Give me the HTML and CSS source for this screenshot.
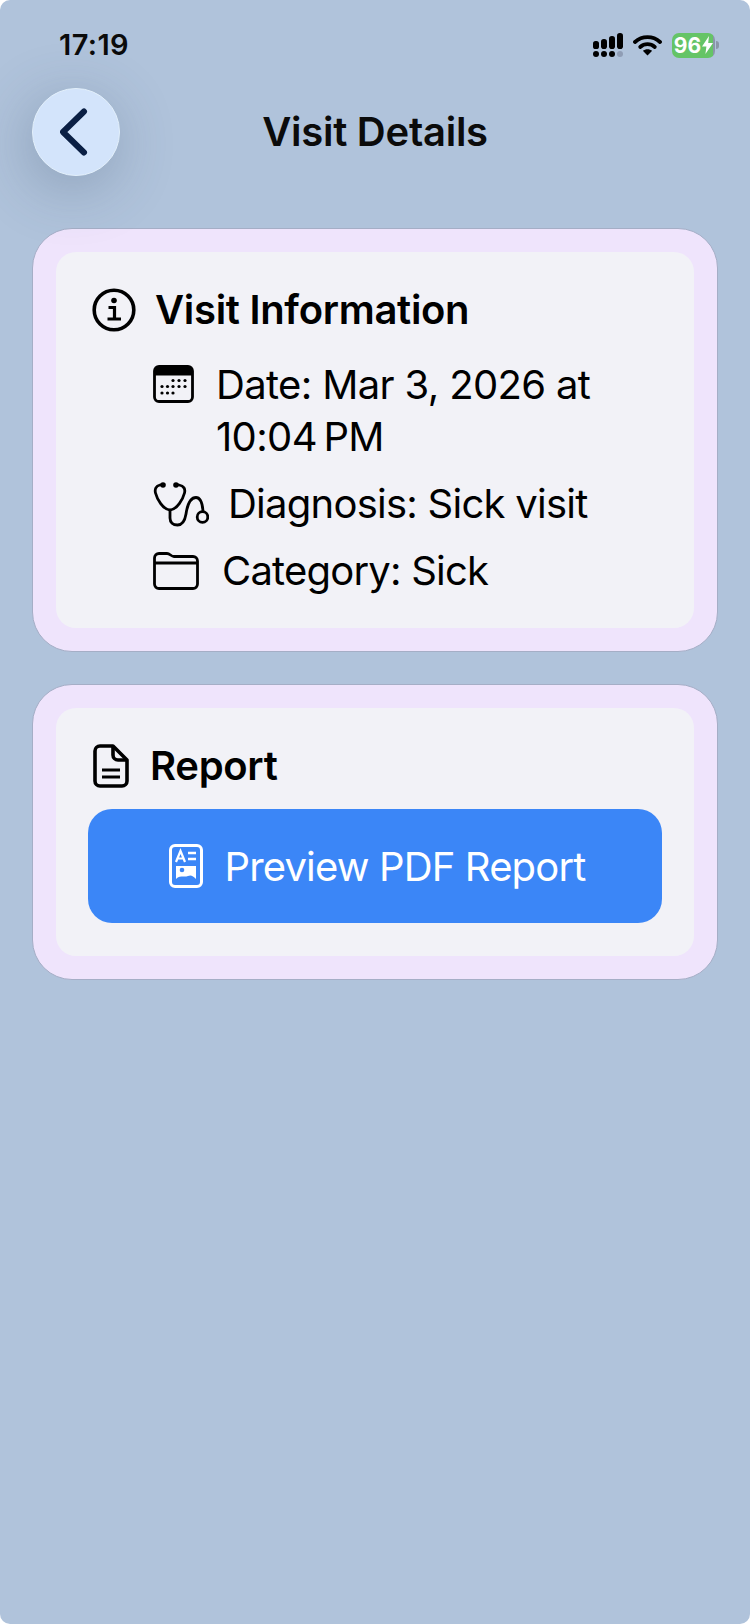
FILE: index.html
```html
<!DOCTYPE html>
<html lang="en">
<head>
    <meta charset="UTF-8">
    <meta name="viewport" content="width=device-width, initial-scale=1.0">
    <title>Visit Details</title>
    <link rel="stylesheet" href="styles.css">
</head>
<body>
    <div class="screen">
        <div class="status-bar">
            <span class="clock">17:19</span>
            <div class="status-icons">
                <svg class="signal" width="30" height="24" viewBox="0 0 30 24">
                    <g fill="#000">
                        <circle cx="3" cy="21" r="3"/><circle cx="11" cy="21" r="3"/><circle cx="19" cy="21" r="3"/>
                        <circle cx="27" cy="21" r="3" fill="#8f9db5"/>
                        <rect x="0" y="8" width="6" height="8" rx="2.6"/>
                        <rect x="8" y="6" width="6" height="10" rx="2.8"/>
                        <rect x="16" y="3" width="6" height="13" rx="2.8"/>
                        <rect x="24" y="0" width="6" height="16" rx="2.8"/>
                    </g>
                </svg>
                <svg class="wifi" width="29" height="22" viewBox="0 0 29 22">
                    <path d="M2 8C9 1.600 20 1.600 27 8" fill="none" stroke="#000" stroke-width="3.800" stroke-linecap="round"/>
                    <path d="M7.200 13C11.500 9.200 17.500 9.200 21.800 13" fill="none" stroke="#000" stroke-width="3.800" stroke-linecap="round"/>
                    <path d="M14.500 21.500L9.800 16.800C12.500 14.600 16.500 14.600 19.200 16.800Z" fill="#000"/>
                </svg>
                <div class="battery">
                    <div class="battery-body">
                        <span>96</span>
                        <svg width="11" height="18" viewBox="0 0 11 18"><path d="M7 0L0 10.500H4.400L3.400 18L11 7H6.200Z" fill="#fff"/></svg>
                    </div>
                    <div class="battery-cap"></div>
                </div>
            </div>
        </div>

        <header class="nav">
            <button class="back-btn">
                <svg width="32" height="50" viewBox="0 0 32 50">
                    <path d="M24 4.500L3 25L24 45.500" fill="none" stroke="#0a1f44" stroke-width="6" stroke-linecap="round" stroke-linejoin="round"/>
                </svg>
            </button>
            <h1>Visit Details</h1>
        </header>

        <section class="card">
            <div class="card-inner info-inner">
                <div class="card-title">
                    <svg class="title-icon" width="44" height="44" viewBox="0 0 44 44">
                        <circle cx="22" cy="22" r="19.800" fill="none" stroke="#000" stroke-width="3.600"/>
                        <circle cx="22" cy="12.500" r="2.800" fill="#000"/>
                        <path d="M16.500 19.500H22.500V31M15.500 31H29" fill="none" stroke="#000" stroke-width="3.200"/>
                    </svg>
                    <h2>Visit Information</h2>
                </div>
                <div class="rows">
                    <div class="row row-date">
                        <svg width="42" height="38" viewBox="0 0 42 38">
                            <rect x="1.500" y="1.500" width="38" height="35" rx="4.500" fill="none" stroke="#000" stroke-width="2.800"/>
                            <path d="M1.500 10.500V6A4.500 4.500 0 0 1 6 1.500H35A4.500 4.500 0 0 1 39.500 6V10.500Z" fill="#000"/>
                            <g fill="#000">
                                <circle cx="20" cy="15.500" r="1.600"/><circle cx="26" cy="15.500" r="1.600"/><circle cx="32" cy="15.500" r="1.600"/>
                                <circle cx="9" cy="21.500" r="1.600"/><circle cx="14.500" cy="21.500" r="1.600"/><circle cx="20" cy="21.500" r="1.600"/><circle cx="26" cy="21.500" r="1.600"/><circle cx="32" cy="21.500" r="1.600"/>
                                <circle cx="9" cy="28" r="1.600"/><circle cx="14.500" cy="28" r="1.600"/><circle cx="20" cy="28" r="1.600"/>
                            </g>
                        </svg>
                        <span class="row-text">Date: Mar 3, 2026 at 10:04&#8201;PM</span>
                    </div>
                    <div class="row row-diagnosis">
                        <svg width="56" height="46" viewBox="0 0 56 46">
                            <path d="M7 4C3 5 1.500 8 2.500 12C4 18 10 28.500 17 29C24 28.500 30 18 31.500 12C32.500 8 31 5 26 4" fill="none" stroke="#000" stroke-width="2.800" stroke-linecap="round"/>
                            <circle cx="10" cy="4" r="2.800" fill="#000"/>
                            <circle cx="23" cy="4" r="2.800" fill="#000"/>
                            <path d="M17 29V37C17 41.500 20 44 24.500 44C30 44 32 39 33 33C34.200 25 37 16.500 43 16.500C47.500 16.500 49.500 23 50 30.500" fill="none" stroke="#000" stroke-width="2.800"/>
                            <circle cx="49.500" cy="36" r="5.300" fill="none" stroke="#000" stroke-width="2.800"/>
                        </svg>
                        <span class="row-text">Diagnosis: Sick visit</span>
                    </div>
                    <div class="row row-category">
                        <svg width="46" height="38" viewBox="0 0 46 38">
                            <path d="M1.500 6A4.500 4.500 0 0 1 6 1.500H14C17 1.500 18 4.500 21 4.500H40A4.500 4.500 0 0 1 44.500 9V32A4.500 4.500 0 0 1 40 36.500H6A4.500 4.500 0 0 1 1.500 32Z" fill="none" stroke="#000" stroke-width="2.800" stroke-linejoin="round"/>
                            <path d="M2 11H44" fill="none" stroke="#000" stroke-width="2.800"/>
                        </svg>
                        <span class="row-text">Category: Sick</span>
                    </div>
                </div>
            </div>
        </section>

        <section class="card">
            <div class="card-inner report-inner">
                <div class="card-title report-title">
                    <svg class="title-icon" width="36" height="44" viewBox="0 0 36 44">
                        <path d="M7 2H20L34 16V37A5 5 0 0 1 29 42H7A5 5 0 0 1 2 37V7A5 5 0 0 1 7 2Z" fill="none" stroke="#000" stroke-width="3.600" stroke-linejoin="round"/>
                        <path d="M20 2V11A5 5 0 0 0 25 16H34" fill="none" stroke="#000" stroke-width="3.600"/>
                        <path d="M9 26H27M9 33H27" fill="none" stroke="#000" stroke-width="2.800"/>
                    </svg>
                    <h2>Report</h2>
                </div>
                <button class="preview-btn">
                    <svg width="34" height="44" viewBox="0 0 34 44">
                        <rect x="1.500" y="1.500" width="31" height="41" rx="4.500" fill="none" stroke="#fff" stroke-width="3"/>
                        <path d="M7 18L11.500 7L16 18M8.700 14.500H14.300" fill="none" stroke="#fff" stroke-width="2.200"/>
                        <path d="M19 9H27M19 15H27" fill="none" stroke="#fff" stroke-width="2.400"/>
                        <path d="M7 22H27V35C24 32 22 30.500 19 32C16 33.500 11 31 7 35Z" fill="#fff"/>
                        <circle cx="13" cy="26" r="2.300" fill="#3b86f7"/>
                    </svg>
                    <span>Preview PDF Report</span>
                </button>
            </div>
        </section>
    </div>
</body>
</html>
```

FILE: styles.css
```css
html, body {
    margin: 0;
    padding: 0;
    background: #fff;
}

body {
    font-family: 'Inter', 'Liberation Sans', sans-serif;
    color: #000;
}

.screen {
    width: 750px;
    height: 1624px;
    box-sizing: border-box;
    padding: 0 32px;
    background: #b0c3db;
    border-radius: 10px;
    overflow: hidden;
}

.status-bar {
    height: 88px;
    display: flex;
    justify-content: space-between;
    align-items: flex-start;
    padding: 29px 3px 0 27px;
    box-sizing: border-box;
    margin-right: -4px;
}

.clock {
    font-size: 29px;
    line-height: 32px;
    font-weight: 600;
    letter-spacing: 0.4px;
    color: #0b0b0b;
}

.status-icons {
    display: flex;
    align-items: center;
    gap: 10px;
    height: 26px;
    margin-top: 3px;
}

.battery {
    display: flex;
    align-items: center;
    gap: 1px;
}

.battery-body {
    width: 43px;
    height: 25px;
    border-radius: 7px;
    background: linear-gradient(to right, #65c466 96%, #8a96a8 96%);
    color: #fff;
    font-size: 21px;
    font-weight: 700;
    display: flex;
    align-items: center;
    justify-content: center;
    gap: 1px;
}

.battery-cap {
    width: 3px;
    height: 8px;
    border-radius: 0 3px 3px 0;
    background: #8a96a8;
}

.nav {
    display: flex;
    align-items: center;
    height: 88px;
    position: relative;
    justify-content: center;
}

.back-btn {
    position: absolute;
    left: 0;
    top: 0;
    width: 88px;
    height: 88px;
    padding: 0;
    border: 1px solid #e3f0fb;
    border-radius: 50%;
    background: #d3e4fb;
    box-shadow: -4px 12px 60px rgba(60, 80, 110, 0.32);
    display: flex;
    align-items: center;
    justify-content: center;
}

h1 {
    margin: 0;
    font-size: 40px;
    font-weight: 600;
    line-height: 48px;
    letter-spacing: -0.25px;
    color: #0b0b0b;
}

.card {
    background: #efe4fc;
    border: 1px solid #a5aec6;
    border-radius: 40px;
    padding: 23px;
    margin-bottom: 32px;
}

.nav + .card {
    margin-top: 52px;
}

.card-inner {
    background: #f2f2f7;
    border-radius: 20px;
}

.info-inner {
    padding: 35px 32px 31px 36px;
}

.report-inner {
    padding: 35px 32px 33px;
}

.card-title {
    display: flex;
    align-items: center;
    gap: 19px;
}

.title-icon {
    flex: none;
}

h2 {
    margin: 0;
    font-size: 40px;
    font-weight: 600;
    line-height: 46px;
    letter-spacing: -0.3px;
}

.rows {
    margin-top: 26px;
    padding-left: 61px;
    display: flex;
    flex-direction: column;
    gap: 15px;
}

.row {
    display: flex;
    align-items: center;
    font-size: 40px;
    line-height: 52px;
    letter-spacing: -0.65px;
}

.row svg {
    flex: none;
}

.row-date {
    align-items: flex-start;
}

.row-date svg {
    margin-top: 6px;
    margin-right: 21px;
}

.row-diagnosis {
    letter-spacing: -0.75px;
}

.row-diagnosis svg {
    margin-right: 19px;
}

.row-category {
    letter-spacing: -0.8px;
}

.row-category svg {
    margin-right: 23px;
}

.report-title {
    padding-left: 5px;
    gap: 21px;
}

.preview-btn {
    width: 100%;
    height: 114px;
    margin-top: 20px;
    padding: 0 0 0 4px;
    border: none;
    border-radius: 24px;
    background: #3b86f7;
    color: #fff;
    font-family: inherit;
    font-size: 40px;
    letter-spacing: -0.85px;
    display: flex;
    align-items: center;
    justify-content: center;
    gap: 22px;
}
```
